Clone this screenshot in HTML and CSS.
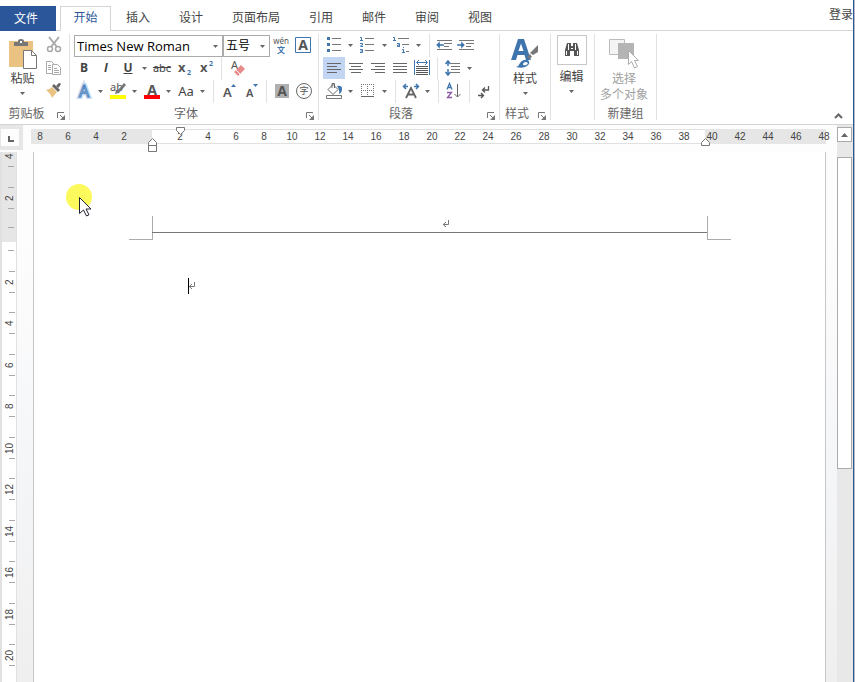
FILE: index.html
```html
<!DOCTYPE html>
<html lang="zh-CN">
<head>
<meta charset="utf-8">
<title>文档</title>
<link rel="stylesheet" href="styles.css">
</head>
<body>
<svg class="defs" width="0" height="0">
  <symbol id="arrow" viewBox="0 0 5 3"><path d="M0 0h5L2.500 3z" fill="#666"/></symbol>
  <symbol id="launch" viewBox="0 0 8 8"><path d="M.5 6V.5H7M3 3l3 3" fill="none" stroke="#777"/><path d="M8 3v5H3z" fill="#777"/></symbol>
  <symbol id="return" viewBox="0 0 8 8"><path d="M6.500 0v4.500H1M4 2L1.200 4.500L4 7" fill="none" stroke="#777"/></symbol>
</svg>
<div class="window">
  <nav class="tabs">
    <button class="tab file">文件</button>
    <button class="tab active">开始</button>
    <button class="tab">插入</button>
    <button class="tab">设计</button>
    <button class="tab">页面布局</button>
    <button class="tab">引用</button>
    <button class="tab">邮件</button>
    <button class="tab">审阅</button>
    <button class="tab">视图</button>
    <a class="login" href="#">登录</a>
  </nav>

  <div class="ribbon">
    <section class="group">
      <div class="tools side">
        <button class="big paste">
          <svg width="28" height="30"><path d="M0 2h24v26H0z" fill="#eac282"/><path d="M5 7V3h4V2q0-2 3-2t3 2v1h4v4z" fill="#777"/><path d="M11 2h2v2h-2z" fill="#fff"/><path d="M14.500 11.500h8l5 5v13h-13z" fill="#fff" stroke="#777"/><path d="M22.500 11.500v5h5" fill="none" stroke="#777"/></svg>
          <span>粘贴</span>
          <svg class="arr"><use href="#arrow"/></svg>
        </button>
        <div class="stack">
          <button class="ic" aria-label="剪切"><svg width="22" height="22"><g fill="none" stroke="#a9a9a9"><path d="M6 3l8 10M16 3L8 13" stroke-width="2"/><circle cx="7" cy="15" r="2.500" stroke-width="1.500"/><circle cx="15" cy="15" r="2.500" stroke-width="1.500"/></g></svg></button>
          <button class="ic" aria-label="复制"><svg width="22" height="22"><g fill="#fff" stroke="#a9a9a9"><path d="M3.500 4.500h5l3 3v9h-8z"/><path d="M9.500 7.500h5l3 3v7h-8z"/><path d="M5 8.500h3M5 10.500h3M5 12.500h3M11 11.500h3M11 13.500h5M11 15.500h5"/></g></svg></button>
          <button class="ic" aria-label="格式刷"><svg width="22" height="22"><path d="M3 10q3 0 6-3l5 5-5 6q-1-4-6-8z" fill="#eac282"/><path d="M9 6l2-2 6 6-2 2z" fill="#666"/><path d="M13 6l3-3 1 1.500L15.500 8z" fill="#666"/><path d="M15 4l2-1 1 1-2 3z" fill="#666"/></svg></button>
        </div>
      </div>
      <div class="caption"><span>剪贴板</span><button class="launcher" aria-label="剪贴板设置"><svg width="8" height="8"><use href="#launch"/></svg></button></div>
    </section>

    <section class="group">
      <div class="tools">
        <div class="row combos">
          <select class="font-name" aria-label="字体"><option>Times New Roman</option></select>
          <select class="font-size" aria-label="字号"><option>五号</option></select>
          <button class="ic" aria-label="拼音指南"><svg width="22" height="22"><text x="11" y="10" class="t8" text-anchor="middle">wén</text><text x="11" y="19" class="t8 blue bold" text-anchor="middle">文</text></svg></button>
          <button class="ic" aria-label="字符边框"><svg width="22" height="22"><path d="M3.500 3.500h15v15h-15z" fill="none" stroke="#3f75ad"/><text x="11" y="16" class="t14 bold" text-anchor="middle">A</text></svg></button>
        </div>
        <div class="row">
          <button class="ic b">B</button>
          <button class="ic i">I</button>
          <button class="ic u">U</button>
          <button class="drop" aria-label="下划线样式"><svg class="arr"><use href="#arrow"/></svg></button>
          <button class="ic s">abc</button>
          <button class="ic" aria-label="下标"><svg width="22" height="22"><text x="5" y="15" class="t13 bold">x</text><text x="14" y="18" class="t7 blue bold">2</text></svg></button>
          <button class="ic" aria-label="上标"><svg width="22" height="22"><text x="5" y="15" class="t13 bold">x</text><text x="14" y="9" class="t7 blue bold">2</text></svg></button>
          <i class="bar"></i>
          <button class="ic" aria-label="清除格式"><svg width="22" height="22"><text x="5" y="12" class="t11">A</text><path d="M8 15l7-7 4 4-7 7z" fill="#e78a8a"/><path d="M10 13l4 4" stroke="#fff"/></svg></button>
        </div>
        <div class="row">
          <button class="ic" aria-label="文本效果"><svg width="22" height="22"><text x="11" y="17" font-size="16" text-anchor="middle" class="halo">A</text><text x="11" y="17" font-size="16" text-anchor="middle" class="glow">A</text></svg></button>
          <button class="drop" aria-label="文本效果选项"><svg class="arr"><use href="#arrow"/></svg></button>
          <button class="ic" aria-label="突出显示"><svg width="22" height="22"><text x="3" y="11" class="t11">ab</text><path d="M8 14l1-4 2 0 6-7 2 2-7 8z" fill="#777"/><path d="M3 15h16v4H3z" fill="#ff0"/></svg></button>
          <button class="drop" aria-label="突出显示颜色"><svg class="arr"><use href="#arrow"/></svg></button>
          <button class="ic" aria-label="字体颜色"><svg width="22" height="22"><text x="11" y="15" class="t14 bold" text-anchor="middle">A</text><path d="M3 15h16v4H3z" fill="#f00"/></svg></button>
          <button class="drop" aria-label="字体颜色选项"><svg class="arr"><use href="#arrow"/></svg></button>
          <button class="ic aa">Aa</button>
          <button class="drop" aria-label="更改大小写"><svg class="arr"><use href="#arrow"/></svg></button>
          <i class="bar"></i>
          <button class="ic" aria-label="增大字号"><svg width="22" height="22"><text x="5" y="17" class="t13 semi">A</text><path d="M13 7l2.500-3L18 7z" fill="#3f75ad"/></svg></button>
          <button class="ic" aria-label="减小字号"><svg width="22" height="22"><text x="6" y="17" class="t11 semi">A</text><path d="M13 4h5l-2.500 3z" fill="#3f75ad"/></svg></button>
          <i class="bar"></i>
          <button class="ic" aria-label="字符底纹"><svg width="22" height="22"><path d="M4 4h14v14H4z" fill="#b0b0b0"/><text x="11" y="16" class="t14 bold" text-anchor="middle">A</text></svg></button>
          <button class="ic" aria-label="带圈字符"><svg width="22" height="22"><circle cx="11" cy="11" r="7.500" fill="none" stroke="#666"/><text x="11" y="14" class="t9" text-anchor="middle">字</text></svg></button>
        </div>
      </div>
      <div class="caption"><span>字体</span><button class="launcher" aria-label="字体设置"><svg width="8" height="8"><use href="#launch"/></svg></button></div>
    </section>

    <section class="group">
      <div class="tools para">
        <div class="row">
          <button class="ic" aria-label="项目符号"><svg width="22" height="22"><path d="M4 3h3v3H4zM4 9h3v3H4zM4 15h3v3H4z" fill="#3f75ad"/><path d="M9 4.500h9M9 10.500h9M9 16.500h9" stroke="#777"/></svg></button>
          <button class="drop" aria-label="项目符号库"><svg class="arr"><use href="#arrow"/></svg></button>
          <button class="ic" aria-label="编号"><svg width="22" height="22"><path d="M3 3.500h1.500V7M3 6.500h3M3 9.500h2.500v1.500h-1L3.500 12.500H6M3 15.500h2.500v3H3M3.500 17h2" fill="none" stroke="#3f75ad"/><path d="M8 4.500h9M8 10.500h9M8 16.500h9" stroke="#777"/></svg></button>
          <button class="drop" aria-label="编号库"><svg class="arr"><use href="#arrow"/></svg></button>
          <button class="ic" aria-label="多级列表"><svg width="22" height="22"><path d="M2 3.500h1.500V7M2 6.500h3M6 9.500h2.500V13M8 12.500H6.500v-1.500h2M12.500 13v1M11 15.500h1.500V19M11 18.500h3" fill="none" stroke="#3f75ad"/><path d="M7 4.500h11M11 10.500h7M15 17.500h3" stroke="#777"/></svg></button>
          <button class="drop" aria-label="多级列表库"><svg class="arr"><use href="#arrow"/></svg></button>
          <i class="bar"></i>
          <button class="ic" aria-label="减少缩进"><svg width="22" height="22"><path d="M3 6.500h15M10 9.500h8M10 12.500h5M3 15.500h15" stroke="#777"/><path d="M2 11l4-4v3h4v2H6v3z" fill="#3f75ad" stroke="#fff" stroke-width=".4"/></svg></button>
          <button class="ic" aria-label="增加缩进"><svg width="22" height="22"><path d="M3 6.500h15M10 9.500h8M10 12.500h5M3 15.500h15" stroke="#777"/><path d="M9 11L5 7v3H1v2h4v3z" fill="#3f75ad" stroke="#fff" stroke-width=".4"/></svg></button>
        </div>
        <div class="row">
          <button class="ic on" aria-label="左对齐"><svg width="22" height="22"><path d="M4 6.500h14M4 9.500h10M4 12.500h14M4 15.500h10" stroke="#666"/></svg></button>
          <button class="ic" aria-label="居中"><svg width="22" height="22"><path d="M4 6.500h14M6 9.500h10M4 12.500h14M6 15.500h10" stroke="#666"/></svg></button>
          <button class="ic" aria-label="右对齐"><svg width="22" height="22"><path d="M4 6.500h14M8 9.500h10M4 12.500h14M8 15.500h10" stroke="#666"/></svg></button>
          <button class="ic" aria-label="两端对齐"><svg width="22" height="22"><path d="M4 6.500h14M4 9.500h14M4 12.500h14M4 15.500h14" stroke="#666"/></svg></button>
          <button class="ic" aria-label="分散对齐"><svg width="22" height="22"><path d="M5 9.500h12M5 11.500h12M5 13.500h12M5 15.500h12M5 17.500h12" stroke="#555"/><path d="M3.500 3v15M18.500 3v15M6 5.500h10M8 3L5.500 5.500L8 8M14 3l2.500 2.500L14 8" stroke="#3f75ad" fill="none"/></svg></button>
          <i class="bar"></i>
          <button class="ic" aria-label="行距"><svg width="22" height="22"><path d="M9 6.500h9M9 9.500h9M9 12.500h9M9 15.500h9" stroke="#777"/><path d="M6 4v5M6 12v6M3.500 7L6 4l2.500 3M3.500 15L6 18l2.500-3" fill="none" stroke="#3f75ad" stroke-width="1.500"/></svg></button>
          <button class="drop" aria-label="行距选项"><svg class="arr"><use href="#arrow"/></svg></button>
        </div>
        <div class="row">
          <button class="ic" aria-label="底纹"><svg width="22" height="22"><path d="M10 4.500l5 5-5 5-5-5zM9 8V3.500h2.500V8" fill="#fff" stroke="#666"/><path d="M14 6q5-1 5 3t-3 5q1-4-2-8z" fill="#3f75ad"/><path d="M3.500 15.500h15v3h-15z" fill="#fff" stroke="#777"/></svg></button>
          <button class="drop" aria-label="底纹颜色"><svg class="arr"><use href="#arrow"/></svg></button>
          <button class="ic" aria-label="边框"><svg width="22" height="22"><path d="M4 4.500h13M4 10.500h13M4.500 4v12M10.500 4v12M16.500 4v12" stroke="#777" stroke-dasharray="1 1"/><path d="M4 16.500h13" stroke="#666"/></svg></button>
          <button class="drop" aria-label="边框选项"><svg class="arr"><use href="#arrow"/></svg></button>
          <i class="bar"></i>
          <button class="ic" aria-label="中文版式"><svg width="22" height="22"><path d="M6 18L11 8l5 10M8 14.500h6" stroke="#666" stroke-width="1.800" fill="none"/><path d="M3 6.500h5M14 6.500h5M6 4L3.500 6.500L6 9M16 4l2.500 2.500L16 9" stroke="#3f75ad" stroke-width="1.500" fill="none"/></svg></button>
          <button class="drop" aria-label="版式选项"><svg class="arr"><use href="#arrow"/></svg></button>
          <i class="bar"></i>
          <button class="ic" aria-label="排序"><svg width="22" height="22"><path d="M4 9.500l2.500-6 2.500 6M5 7.500h3" fill="none" stroke="#3f75ad" stroke-width="1.300"/><path d="M4 12.500h4.500l-4 5H9" fill="none" stroke="#8a5aa8" stroke-width="1.300"/><path d="M14.500 4v13M11.500 14l3 3 3-3" fill="none" stroke="#666"/></svg></button>
          <i class="bar"></i>
          <button class="ic" aria-label="显示编辑标记"><svg width="22" height="22"><path d="M14.500 6v4H9M11 7.500L8.500 10l2.500 2.500M4 15.500h5M7 13l2.500 2.500L7 18" fill="none" stroke="#555" stroke-width="1.300"/></svg></button>
        </div>
      </div>
      <div class="caption"><span>段落</span><button class="launcher" aria-label="段落设置"><svg width="8" height="8"><use href="#launch"/></svg></button></div>
    </section>

    <section class="group styles">
      <div class="tools">
        <button class="big">
          <svg width="28" height="30"><path d="M0 21L7 0h6l7 21h-5l-1.500-5H6.500L5 21zM7.500 12h5L10 4.500z" fill="#3f75ad"/><path d="M27 6v7l-5 3-3-2z" fill="#777"/><path d="M19 15l2 3-3 2-2-2z" fill="#777"/><path d="M5 28q3-1 4-4 3-4 8-3 3 3-1 6-4 3-11 1z" fill="#3f75ad"/><path d="M12 26q0-3 3-3l2 1q-1 3-5 2z" fill="#fff"/></svg>
          <span>样式</span>
          <svg class="arr"><use href="#arrow"/></svg>
        </button>
      </div>
      <div class="caption"><span>样式</span><button class="launcher" aria-label="样式设置"><svg width="8" height="8"><use href="#launch"/></svg></button></div>
    </section>

    <section class="group edit">
      <div class="tools">
        <button class="big boxed">
          <svg width="30" height="30"><path d="M10 8h4v3h2V8h4l2 7v6h-5v-5h-4v5H8v-6z" fill="#555"/><path d="M11.500 9v6M18.500 9v6M9.500 16v4M20.500 16v4M14 13.500h2" stroke="#fff"/></svg>
          <span>编辑</span>
          <svg class="arr"><use href="#arrow"/></svg>
        </button>
      </div>
      <div class="caption"></div>
    </section>

    <section class="group new">
      <div class="tools">
        <button class="big" disabled>
          <svg width="30" height="30"><path d="M.5.500h15v15H.5z" fill="#f4f4f4" stroke="#bbb"/><path d="M9 4h16v16H9z" fill="#b4b4b4"/><path d="M19.500 11.500v14l3-3 3 6.500 3-1.500-3-6h4z" fill="#fff" stroke="#aaa"/></svg>
          <span>选择</span>
          <span>多个对象</span>
        </button>
      </div>
      <div class="caption"><span>新建组</span></div>
    </section>
    <button class="collapse" aria-label="折叠功能区"><svg width="9" height="6"><path d="M1 5l3.500-3.500L8 5" fill="none" stroke="#666" stroke-width="2"/></svg></button>
  </div>

  <div class="work">
    <div class="editor">
      <div class="hruler">
        <button class="corner" aria-label="制表符"><svg width="6" height="6"><path d="M1 0v5h5" fill="none" stroke="#666" stroke-width="2"/></svg></button>
        <div class="scale">
          <div class="off before"><span>8</span><span>6</span><span>4</span><span>2</span>
            <svg class="indent hang" width="9" height="14"><path d="M.5 13.500v-9l4-4 4 4v9zM0 7.500h9" fill="#fff" stroke="#777"/></svg>
          </div>
          <div class="text"><span>2</span><span>4</span><span>6</span><span>8</span><span>10</span><span>12</span><span>14</span><span>16</span><span>18</span><span>20</span><span>22</span><span>24</span><span>26</span><span>28</span><span>30</span><span>32</span><span>34</span><span>36</span><span>38</span>
            <svg class="indent first" width="9" height="8"><path d="M.5.500h8v3l-4 4-4-4z" fill="#fff" stroke="#777"/></svg>
          </div>
          <div class="off after"><span>40</span><span>42</span><span>44</span><span>46</span><span>48</span>
            <svg class="indent right" width="9" height="8"><path d="M.5 7.500v-3l4-4 4 4v3z" fill="#fff" stroke="#777"/></svg>
          </div>
        </div>
      </div>
      <div class="canvas">
        <div class="vruler">
          <div class="voff"><span>4</span><span>2</span><i class="half"></i></div>
          <div class="vtext"><i class="half"></i><span>2</span><span>4</span><span>6</span><span>8</span><span>10</span><span>12</span><span>14</span><span>16</span><span>18</span><span>20</span></div>
        </div>
        <main class="page">
          <header class="head">
            <i class="crop left"></i>
            <p><svg width="8" height="8"><use href="#return"/></svg></p>
            <i class="crop right"></i>
          </header>
          <p class="line"><i class="caret"></i><svg width="8" height="8"><use href="#return"/></svg></p>
          <svg class="pointer" width="30" height="34"><circle cx="13" cy="13" r="13" fill="#fbf95c"/><path d="M13.500 13.500v16l4-3.500 3 6 2.500-1.200-3-5.800h5z" fill="#fff" stroke="#223"/></svg>
        </main>
      </div>
    </div>
    <div class="scroll">
      <button aria-label="向上滚动"><svg width="7" height="4"><path d="M0 4L3.500 0L7 4z" fill="#666"/></svg></button>
      <div class="thumb"></div>
    </div>
  </div>
</div>
</body>
</html>
```
FILE: styles.css
```css
* {
	box-sizing: border-box;
}
body {
	margin: 0;
	padding-right: 1px;
	background: #b5b8c0;
	color: #444;
	font: 12px/16px "Noto Sans", "Noto Sans CJK SC", sans-serif;
}
button, select {
	margin: 0;
	padding: 0;
	border: 0;
	background: none;
	color: inherit;
	font: inherit;
}
p {
	margin: 0;
}
svg {
	display: block;
	flex: none;
}
.defs {
	position: absolute;
}
.window {
	display: flex;
	flex-direction: column;
	height: 100vh;
	overflow: hidden;
	background: #fff;
	border-right: 1px solid #2b579a;
}

/* tabs */
.tabs {
	display: flex;
	gap: 1px;
	height: 31px;
	padding-top: 6px;
	border-bottom: 1px solid #d4d4d4;
}
.tab {
	padding: 0 14px;
	height: 24px;
}
.tab.file {
	width: 56px;
	height: 25px;
	padding-right: 18px;
	margin-right: 3px;
	background: #2b579a;
	color: #fff;
}
.tab.active {
	width: 51px;
	height: 25px;
	padding: 0 12px 2px;
	border: 1px solid #d4d4d4;
	border-bottom: 0;
	background: #fff;
	color: #2b579a;
}
.login {
	margin-left: auto;
	padding-top: 1px;
	color: #444;
	text-decoration: none;
}

/* ribbon */
.ribbon {
	display: flex;
	height: 94px;
	border-bottom: 1px solid #d4d4d4;
}
.group {
	display: flex;
	flex-direction: column;
	margin: 3px 0 4px;
	border-right: 1px solid #e1e1e1;
}
.tools {
	height: 69px;
	padding: 0 3px;
}
.side {
	display: flex;
	padding: 0 4px 0 0;
}
.para {
	padding: 0 3px 0 4px;
}
.row {
	display: flex;
	height: 23px;
}
.combos {
	padding-left: 1px;
}
.ic {
	width: 22px;
	height: 22px;
	text-align: center;
	white-space: nowrap;
	flex: none;
}
.stack .ic {
	display: block;
	margin-bottom: 1px;
}
.on {
	background: #c2d5f2;
}
.b, .i, .u {
	font-weight: bold;
	font-family: "Open Sans", sans-serif;
}
.i {
	font-style: italic;
}
.u {
	text-decoration: underline;
}
.s {
	font-size: 11px;
	text-decoration: line-through;
}
.aa {
	font-size: 13px;
}
.drop {
	width: 10px;
	height: 22px;
	margin-right: 2px;
}
.arr {
	width: 5px;
	height: 3px;
	margin: auto;
}
.bar {
	width: 1px;
	margin: 0 4px;
	background: #e1e1e1;
}
.big {
	display: flex;
	flex-direction: column;
	align-items: center;
	width: 100%;
	height: 69px;
	padding-top: 5px;
	white-space: nowrap;
}
.big span {
	margin-top: 2px;
	line-height: 16px;
}
.big span + span {
	margin-top: 0;
}
.big .arr {
	margin: 5px 0 0;
}
.big:disabled {
	color: #a0a0a0;
}
.paste {
	width: 43px;
	padding-left: 2px;
}
.boxed {
	padding-top: 1px;
}
.boxed > svg:first-child {
	outline: 1px solid #c8c8c8;
	outline-offset: -1px;
}
.boxed span {
	margin-top: 4px;
}
.styles, .edit, .new {
	text-align: center;
}
.styles {
	width: 51px;
}
.edit {
	width: 44px;
}
.edit .tools {
	padding: 0 5px 0 3px;
}
.new {
	width: 62px;
}
.new .tools {
	padding: 0 4px 0 1px;
}
.caption {
	display: flex;
	align-items: center;
	height: 18px;
	margin-top: 3px;
	color: #666;
}
.caption span {
	flex: 1;
	text-align: center;
}
.launcher {
	width: 16px;
	padding: 4px 4px 0;
}
.collapse {
	align-self: flex-end;
	margin-left: auto;
	padding: 5px 10px;
}
.font-name, .font-size {
	appearance: none;
	height: 22px;
	margin-top: 1px;
	padding-left: 2px;
	border: 1px solid #ababab;
	background: #fff url("data:image/svg+xml,%3Csvg xmlns='http://www.w3.org/2000/svg' width='5' height='3'%3E%3Cpath d='M0 0h5L2.500 3z' fill='%23666'/%3E%3C/svg%3E") no-repeat right 4px center;
	color: #000;
}
.font-name {
	width: 149px;
	font-family: "Open Sans", sans-serif;
	font-size: 13px;
}
.font-size {
	width: 47px;
}

/* lettering inside icons */
svg text {
	fill: #555;
}
.t7 {
	font-size: 7px;
}
.t8 {
	font-size: 8px;
}
.t9 {
	font-size: 9px;
}
.t11 {
	font-size: 11px;
}
.t13 {
	font-size: 13px;
}
.t14 {
	font-size: 14px;
}
.bold {
	font-weight: bold;
}
.semi {
	font-weight: 600;
}
svg .blue {
	fill: #3f75ad;
}
svg .halo {
	fill: none;
	stroke: #c9dcf2;
	stroke-width: 4;
}
svg .glow {
	fill: #fff;
	stroke: #4a80bd;
	stroke-width: 1;
}

/* work area */
.work {
	display: flex;
	flex: 1;
	min-height: 0;
	background: linear-gradient(#fdfdfd 20%, #f5f6f8 60%, #efefef);
}
.editor {
	display: flex;
	flex-direction: column;
	flex: 1;
	min-width: 0;
}
.hruler {
	display: flex;
	height: 27px;
	padding-right: 11px;
	font: 10px/15px "Liberation Sans", sans-serif;
}
.corner {
	display: flex;
	align-items: center;
	justify-content: center;
	width: 23px;
	height: 25px;
	margin-right: 8px;
	padding: 3px 0 0 2px;
	border: 4px solid #e6e6e6;
	border-left-width: 1px;
	background: #fdfdfd;
}
.scale {
	display: flex;
	flex: 1;
	height: 15px;
	margin-top: 4px;
}
.scale span {
	width: 28px;
	flex: none;
	text-align: center;
}
.scale > div {
	position: relative;
	display: flex;
}
.off {
	width: 121px;
	background: #e6e6e6;
}
.before {
	justify-content: flex-end;
	padding-right: 14px;
}
.after {
	justify-content: center;
	padding-left: 5px;
}
.text {
	flex: 1;
	padding-left: 14px;
	background: #fff;
	border: solid #e1e1e1;
	border-width: 1px 0;
	line-height: 13px;
}
.indent {
	position: absolute;
	z-index: 1;
}
.hang {
	right: -5px;
	top: 9px;
}
.first {
	left: 24px;
	top: -3px;
}
.right.indent {
	left: -4px;
	top: 9px;
}
.canvas {
	display: flex;
	flex: 1;
	min-height: 0;
}
.vruler {
	display: flex;
	flex-direction: column;
	width: 17px;
	margin-right: 16px;
	overflow: hidden;
	border: solid #e1e1e1;
	border-width: 0 1px 0 2px;
	background: #fff;
	font: 10px/14px "Liberation Sans", sans-serif;
}
.voff {
	display: flex;
	flex-direction: column;
	justify-content: flex-end;
	height: 90px;
	background: #e6e6e6;
}
.vruler span {
	display: block;
	flex: none;
	height: 42px;
	margin-left: 1px;
	text-align: center;
	writing-mode: vertical-rl;
	transform: rotate(180deg);
	background: linear-gradient(#aaa, #aaa) 2px 10px / 6px 1px no-repeat, linear-gradient(#aaa, #aaa) 2px 31px / 6px 1px no-repeat;
}
.vtext span:nth-child(odd) {
	height: 41px;
}
.half {
	display: block;
	height: 19px;
	background: linear-gradient(#aaa, #aaa) 6px 8px / 6px 1px no-repeat;
}
.voff .half {
	height: 23px;
	flex: none;
}
.page {
	position: relative;
	flex: 1;
	margin-right: 11px;
	padding-top: 64px;
	border: solid #c6c6c6;
	border-width: 0 1px;
	background: #fff;
}
.head {
	display: flex;
	padding: 0 94px 0 95px;
}
.crop {
	width: 24px;
	height: 24px;
	border: solid #ababab;
	border-width: 0 0 1px;
}
.crop.left {
	border-right-width: 1px;
}
.crop.right {
	border-left-width: 1px;
}
.head p {
	display: flex;
	align-items: center;
	justify-content: center;
	flex: 1;
	height: 17px;
	margin: 0 -1px;
	padding-left: 32px;
	border-bottom: 1px solid #777;
}
.line {
	display: flex;
	align-items: center;
	margin: 38px 118px 0 154px;
	height: 16px;
}
.caret {
	width: 1px;
	height: 16px;
	margin-right: -1px;
	background: #000;
}
.pointer {
	position: absolute;
	left: 32px;
	top: 32px;
}
.scroll {
	width: 16px;
	padding: 2px 1px 0 0;
	background: #e8e8e8;
}
.scroll button {
	display: flex;
	align-items: center;
	justify-content: center;
	width: 15px;
	height: 15px;
	border: 1px solid #ababab;
	background: #fff;
}
.thumb {
	height: 312px;
	margin-top: 15px;
	border: 1px solid #ababab;
	background: #fff;
}
```
